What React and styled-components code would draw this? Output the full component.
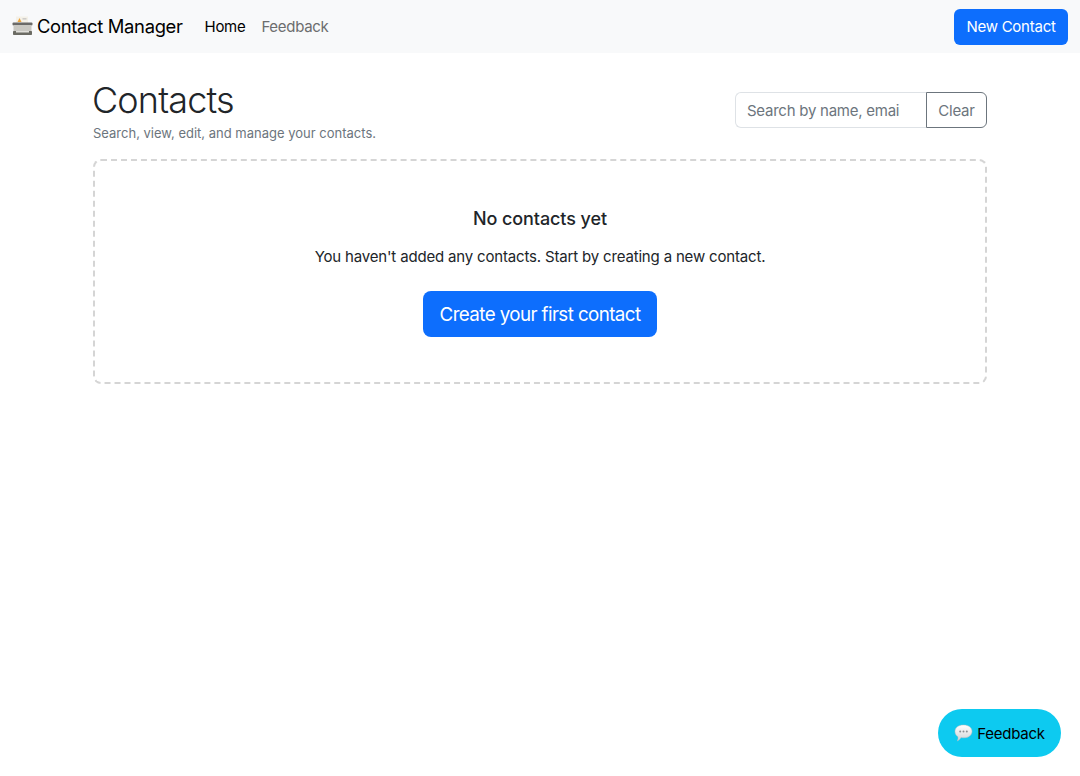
import React from 'react';
import styled, { createGlobalStyle } from 'styled-components';

const GlobalStyle = createGlobalStyle`
	body {
		margin: 0;
		background-color: #fff;
		color: #212529;
		font-family: Inter, 'Liberation Sans', sans-serif;
		font-size: 16px;
		line-height: 1.5;
	}
`;
const Navbar = styled.nav`
	height: 53px;
	box-sizing: border-box;
	padding: 0 12px;
	background-color: #f8f9fa;
	display: flex;
	align-items: center;
`;
const Brand = styled.a`
	display: flex;
	align-items: center;
	gap: 4px;
	font-size: 18.4px;
	letter-spacing: -0.33px;
	color: #000;
	margin-right: 22px;
`;
const NavLink = styled.a`
	font-size: 15px;
	letter-spacing: -0.3px;
	color: ${(props) => (props.$active ? '#000' : '#6c6d6e')};
	margin: 2px 16px 0 0;
`;
const PrimaryButton = styled.button`
	border: none;
	background-color: #0d6efd;
	color: white;
	font-family: inherit;
	cursor: pointer;
	font-size: ${(props) => (props.$large ? '18.8px' : '15px')};
	letter-spacing: ${(props) => (props.$large ? '-0.6px' : '-0.25px')};
	height: ${(props) => (props.$large ? '46px' : '36px')};
	width: ${(props) => (props.$large ? '234px' : '114px')};
	border-radius: ${(props) => (props.$large ? '8px' : '6px')};
	padding: 0;
	${(props) => (props.$pushRight ? 'margin-left: auto;' : '')}
`;
const Main = styled.main`
	width: 894px;
	margin: 0 auto;
	padding-top: 24px;
`;
const Header = styled.div`
	display: flex;
	justify-content: space-between;
	align-items: flex-start;
	height: 82px;
`;
const Title = styled.h1`
	margin: 0 0 0 -1px;
	font-size: 36px;
	font-weight: 300;
	line-height: 46px;
	letter-spacing: -0.85px;
`;
const Subtitle = styled.div`
	font-size: 13px;
	line-height: 21px;
	color: #6c757d;
`;
const SearchGroup = styled.form`
	display: flex;
	margin-top: 15px;
	height: 36px;
`;
const SearchInput = styled.input`
	width: 191px;
	box-sizing: border-box;
	border: 1px solid #dee2e6;
	border-right: none;
	border-radius: 6px 0 0 6px;
	padding: 0 26px 0 11px;
	font-family: inherit;
	font-size: 15px;
	letter-spacing: -0.25px;
	color: #212529;
	outline: none;

	&::placeholder {
		color: #6c757d;
		opacity: 1;
	}
`;
const ClearButton = styled.button`
	width: 61px;
	box-sizing: border-box;
	border: 1px solid #6c757d;
	border-radius: 0 6px 6px 0;
	background: white;
	color: #6c757d;
	font-family: inherit;
	font-size: 15px;
	letter-spacing: -0.25px;
	padding: 0;
`;
const EmptyPanel = styled.section`
	box-sizing: border-box;
	height: 225px;
	border: 2px dashed #d5d5d5;
	border-radius: 8px;
	display: flex;
	flex-direction: column;
	align-items: center;
	padding-top: 47px;
`;
const EmptyTitle = styled.h5`
	margin: 0 0 16px;
	font-size: 18px;
	font-weight: 500;
	line-height: 21px;
	letter-spacing: -0.1px;
`;
const EmptyText = styled.p`
	margin: 0 0 23px;
	font-size: 15px;
	line-height: 23px;
	letter-spacing: -0.17px;
`;
const FeedbackPill = styled.button`
	position: fixed;
	left: 938px;
	top: 709px;
	width: 123px;
	height: 48px;
	border: none;
	border-radius: 24px;
	background-color: #0dcaf0;
	color: #000;
	font-family: inherit;
	font-size: 15px;
	letter-spacing: -0.25px;
	padding: 0;
	display: flex;
	align-items: center;
	justify-content: center;
	gap: 4px;
`;

const FaxIcon = () => (
	<svg width="21" height="20" viewBox="0 0 21 20">
		<rect x="4" y="0.5" width="12" height="8" fill="#f4f1e8" />
		<path d="M7.5 2 L5.5 6 H9.5 Z" fill="#eda53a" />
		<rect x="10.5" y="2.5" width="4" height="0.8" fill="#aaa" />
		<rect x="0.5" y="6.5" width="20" height="3" rx="1" fill="#6a6a68" />
		<rect x="1.5" y="9" width="18" height="8" fill="#c9c8c2" />
		<rect x="1" y="15" width="19" height="4" rx="0.8" fill="#6b6b63" />
		<rect x="4" y="15" width="13" height="1.5" fill="#e0dfda" />
	</svg>
);

const BubbleIcon = () => (
	<svg width="19" height="19" viewBox="0 0 19 19">
		<defs>
			<linearGradient id="bubbleFill" x1="0" y1="0" x2="0" y2="1">
				<stop offset="0" stopColor="#ffffff" />
				<stop offset="1" stopColor="#cfd3d6" />
			</linearGradient>
		</defs>
		<path d="M9.5 1 C14.5 1 18 3.6 18 7.4 C18 11.2 14.5 13.8 9.5 13.8 C8.6 13.8 7.8 13.7 7 13.5 C6.2 15 5 16.2 3.4 17 C4 15.6 4.2 14.2 4 12.8 C2.1 11.6 1 9.7 1 7.4 C1 3.6 4.5 1 9.5 1 Z" fill="url(#bubbleFill)" stroke="#b9bdc0" strokeWidth="0.5" />
		<circle cx="6.2" cy="7.4" r="1" fill="#8b8f93" />
		<circle cx="9.5" cy="7.4" r="1" fill="#8b8f93" />
		<circle cx="12.8" cy="7.4" r="1" fill="#8b8f93" />
	</svg>
);

const App = () => {
	return (
		<>
			<GlobalStyle />
			<Navbar>
				<Brand>
					<FaxIcon />
					Contact Manager
				</Brand>
				<NavLink $active>Home</NavLink>
				<NavLink>Feedback</NavLink>
				<PrimaryButton $pushRight>New Contact</PrimaryButton>
			</Navbar>
			<Main>
				<Header>
					<div>
						<Title>Contacts</Title>
						<Subtitle>Search, view, edit, and manage your contacts.</Subtitle>
					</div>
					<SearchGroup>
						<SearchInput placeholder="Search by name, email, or phone" />
						<ClearButton type="button">Clear</ClearButton>
					</SearchGroup>
				</Header>
				<EmptyPanel>
					<EmptyTitle>No contacts yet</EmptyTitle>
					<EmptyText>You haven't added any contacts. Start by creating a new contact.</EmptyText>
					<PrimaryButton $large>Create your first contact</PrimaryButton>
				</EmptyPanel>
			</Main>
			<FeedbackPill>
				<BubbleIcon />
				Feedback
			</FeedbackPill>
		</>
	);
};

export default App;
